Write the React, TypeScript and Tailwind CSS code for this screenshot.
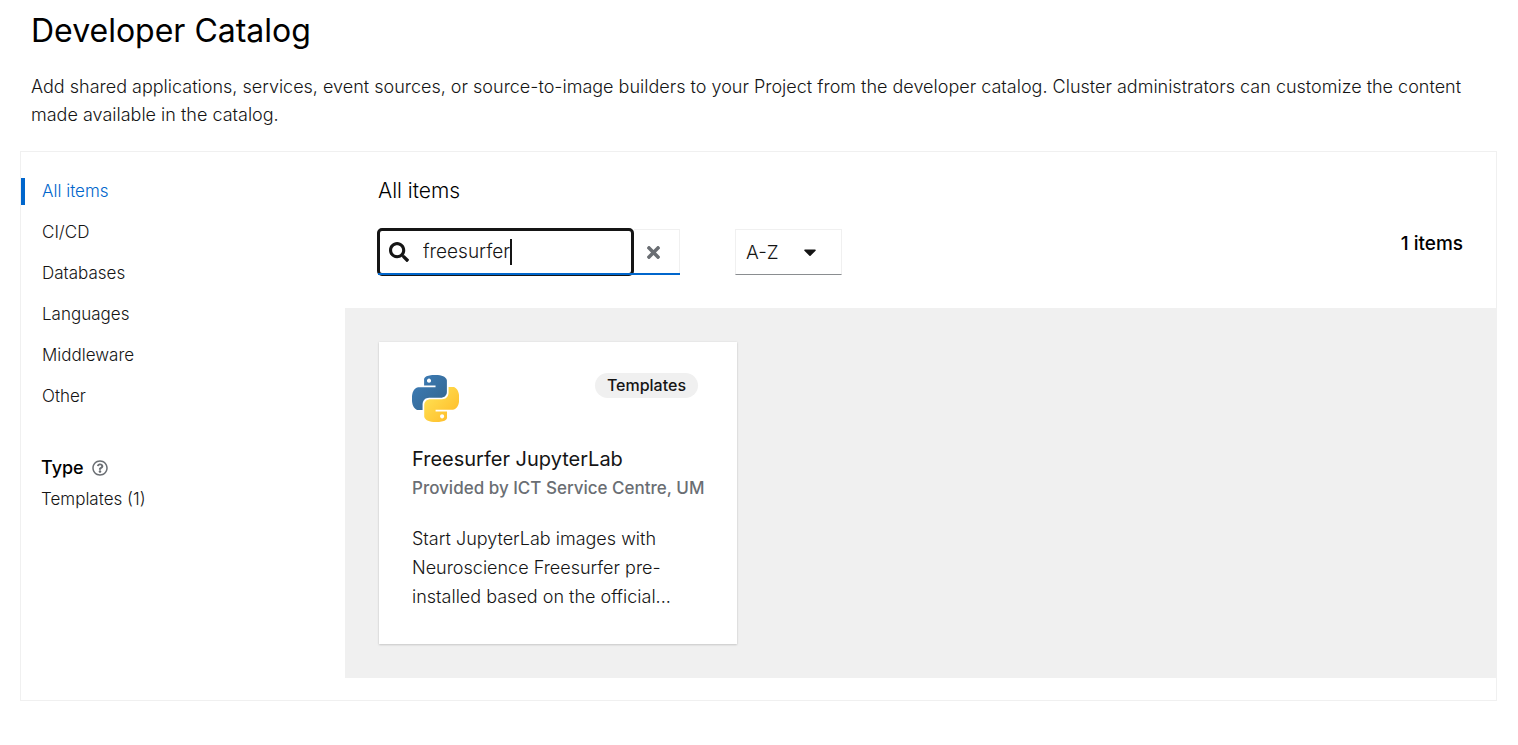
import { useState } from "react";
import { FaCaretDown, FaRegQuestionCircle, FaSearch, FaTimes } from "react-icons/fa";

const categories = ["All items", "CI/CD", "Databases", "Languages", "Middleware", "Other"];

function PythonLogo() {
  return (
    <svg viewBox="0 0 24 24" className="size-[47px]" role="img" aria-label="Python">
      <defs>
        <linearGradient id="py-blue" x1="0" y1="0" x2="0.8" y2="0.8">
          <stop offset="0" stopColor="#3c7ebb" />
          <stop offset="1" stopColor="#366994" />
        </linearGradient>
        <linearGradient id="py-yellow" x1="0.1" y1="0.2" x2="0.7" y2="0.8">
          <stop offset="0" stopColor="#ffe052" />
          <stop offset="1" stopColor="#ffc331" />
        </linearGradient>
      </defs>
      <path
        fill="url(#py-blue)"
        d="M14.25.18l.9.2.73.26.59.3.45.32.34.34.25.34.16.33.1.3.04.26.02.2-.01.13V8.5l-.05.63-.13.55-.21.46-.26.38-.3.31-.33.25-.35.19-.35.14-.33.1-.3.07-.26.04-.21.02H8.77l-.69.05-.59.14-.5.22-.41.27-.33.32-.27.35-.2.36-.15.37-.1.35-.07.32-.04.27-.02.21v3.06H3.17l-.21-.03-.28-.07-.32-.12-.35-.18-.36-.26-.36-.36-.35-.46-.32-.59-.28-.73-.21-.88-.14-1.05-.05-1.23.06-1.22.16-1.04.24-.87.32-.71.36-.57.4-.44.42-.33.42-.24.4-.16.36-.1.32-.05.24-.01h.16l.06.01h8.16v-.83H6.18l-.01-2.75-.02-.37.05-.34.11-.31.17-.28.25-.26.31-.23.38-.2.44-.18.51-.15.58-.12.64-.1.71-.06.77-.04.84-.02 1.27.05zm-6.3 1.98l-.23.33-.08.41.08.41.23.34.33.22.41.09.41-.09.33-.22.23-.34.08-.41-.08-.41-.23-.33-.33-.22-.41-.09-.41.09z"
      />
      <path
        fill="url(#py-yellow)"
        d="M21.1 6.11l.28.06.32.12.35.18.36.27.36.35.35.47.32.59.28.73.21.88.14 1.04.05 1.23-.06 1.23-.16 1.04-.24.86-.32.71-.36.57-.4.45-.42.33-.42.24-.4.16-.36.09-.32.05-.24.02-.16-.01h-8.22v.82h5.84l.01 2.76.02.36-.05.34-.11.31-.17.29-.25.25-.31.24-.38.2-.44.17-.51.15-.58.13-.64.09-.71.07-.77.04-.84.01-1.27-.04-1.07-.14-.9-.2-.73-.25-.59-.3-.45-.33-.34-.34-.25-.34-.16-.33-.1-.3-.04-.25-.02-.2.01-.13v-5.34l.05-.64.13-.54.21-.46.26-.38.3-.32.33-.24.35-.2.35-.14.33-.1.3-.06.26-.04.21-.02.13-.01h5.84l.69-.05.59-.14.5-.21.41-.28.33-.32.27-.35.2-.36.15-.36.1-.35.07-.32.04-.28.02-.21V6.07h2.09l.14.01zm-6.47 14.25l-.23.33-.08.41.08.41.23.33.33.23.41.08.41-.08.33-.23.23-.33.08-.41-.08-.41-.23-.33-.33-.23-.41-.08-.41.08z"
      />
    </svg>
  );
}

export default function App() {
  const [query, setQuery] = useState("freesurfer");
  const [active, setActive] = useState("All items");

  return (
    <div className="bg-white pt-[9px] pr-[21px] pb-11 pl-5 font-['Inter',sans-serif] font-light text-[#151515]">
      <header className="px-[11px]">
        <h1 className="text-[32px] leading-[44px] font-normal text-black">Developer Catalog</h1>
        <p className="mt-5 text-[18px] leading-7">
          Add shared applications, services, event sources, or source-to-image builders to your Project from the
          developer catalog. Cluster administrators can customize the content made available in the catalog.
        </p>
      </header>

      <main className="mt-[22px] flex border border-[#f0f0f0] pb-[22px]">
        <aside className="w-[324px] shrink-0 pt-[26px] text-[17px]">
          <nav aria-label="Categories" className="flex flex-col items-start gap-[14px]">
            {categories.map((name) => (
              <button
                key={name}
                type="button"
                onClick={() => setActive(name)}
                className={
                  name === active
                    ? "border-l-4 border-[#0066cc] pl-[17px] text-[#0066cc]"
                    : "border-l-4 border-transparent pl-[17px]"
                }
              >
                <span className="block leading-[27px]">{name}</span>
              </button>
            ))}
          </nav>
          <div className="mt-11 pl-5">
            <h2 className="flex items-center gap-2 text-[18px] leading-7 font-medium text-black">
              Type
              <FaRegQuestionCircle className="size-4 text-[#6a6e73]" />
            </h2>
            <button type="button" className="mt-1 block leading-[27px]">
              Templates (1)
            </button>
          </div>
        </aside>

        <section className="min-w-0 flex-1">
          <div className="px-[33px] pt-6 pb-[33px]">
            <h2 className="text-[21px] leading-[30px] text-black">All items</h2>
            <div className="mt-[23px] flex items-start justify-between">
              <div className="flex gap-[55px]">
                <div className="relative flex h-[46px] after:absolute after:inset-x-0 after:bottom-0 after:h-0.5 after:bg-[#0066cc]">
                  <label className="-my-px -ml-px flex w-[257px] items-center rounded-[5px] border-[3px] border-[#151515] pl-[9px]">
                    <FaSearch className="size-5" aria-hidden="true" />
                    <input
                      type="text"
                      aria-label="Filter by keyword"
                      value={query}
                      onChange={(e) => setQuery(e.target.value)}
                      className="ml-[14px] max-w-48 bg-transparent text-[19px] leading-7 [field-sizing:content] caret-transparent outline-none"
                    />
                    <span className="h-[26px] w-0.5 bg-[#151515]" />
                  </label>
                  <button
                    type="button"
                    aria-label="Clear"
                    onClick={() => setQuery("")}
                    className="flex w-[46px] items-center border-t border-r border-[#f0f0f0] pl-[10px] text-[#6a6e73]"
                  >
                    <FaTimes className="size-[19px]" />
                  </button>
                </div>
                <div className="relative h-[46px] w-[107px] border border-[#f0f0f0] border-b-[#8a8d90]">
                  <select
                    aria-label="Sort order"
                    className="size-full appearance-none bg-transparent pt-0.5 pl-2.5 text-[19px] outline-none"
                  >
                    <option>A-Z</option>
                    <option>Z-A</option>
                  </select>
                  <FaCaretDown className="pointer-events-none absolute top-3 right-[21px] size-5" />
                </div>
              </div>
              <p className="text-[19px] leading-[30px] font-medium text-black">1 items</p>
            </div>
          </div>

          <div className="bg-[#f0f0f0] p-[34px]">
            <a
              href="#freesurfer"
              className="block w-[358px] bg-white p-[33px] shadow-[0_1px_2px_rgba(3,3,3,0.15),0_0_2px_rgba(3,3,3,0.08)]"
            >
              <div className="flex items-start justify-between pr-[6px]">
                <PythonLogo />
                <span className="-mt-0.5 rounded-full bg-[#f0f0f0] px-3 text-[16px] leading-[25px] font-medium">
                  Templates
                </span>
              </div>
              <h3 className="mt-[22px] text-[20px] leading-[30px] font-normal">Freesurfer JupyterLab</h3>
              <p className="text-[17px] leading-7 font-medium whitespace-nowrap text-[#6a6e73]">
                Provided by ICT Service Centre, UM
              </p>
              <p className="mt-[22px] text-[18px] leading-[29px]">
                Start JupyterLab images with Neuroscience Freesurfer pre-installed based on the official...
              </p>
            </a>
          </div>
        </section>
      </main>
    </div>
  );
}
